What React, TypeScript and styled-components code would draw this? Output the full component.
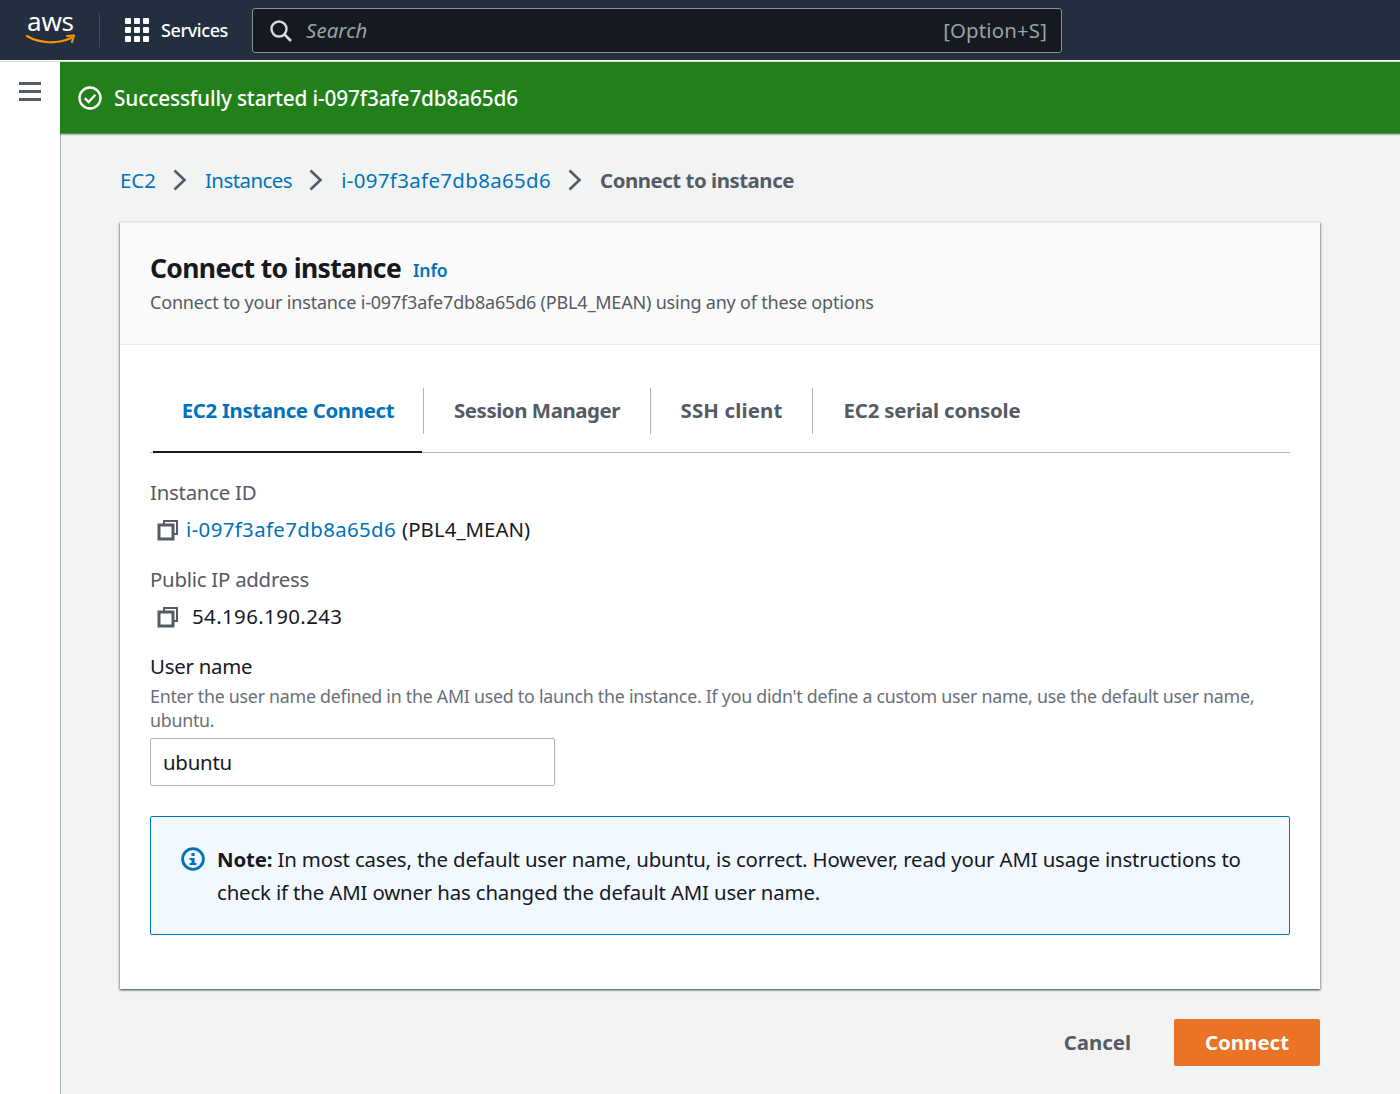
import React from 'react';
import styled, { createGlobalStyle } from 'styled-components';

const GlobalStyle = createGlobalStyle`
  html, body { margin: 0; padding: 0; background: #f2f3f3; }
  body { font-family: "Noto Sans", "Open Sans", sans-serif; color: #16191f; }
  * { box-sizing: border-box; }
`;

const Page = styled.div`
  width: 1400px;
  height: 1094px;
  overflow: hidden;
  display: flex;
  flex-direction: column;
`;

const TopBar = styled.header`
  height: 62px;
  flex: none;
  background: #232f3e;
  border-bottom: 1px solid #d5dbdb;
  box-shadow: inset 0 -1px 0 #fff;
  display: flex;
  align-items: flex-start;
  padding: 8px 0 0 26px;
`;

const Logo = styled.div`
  position: relative;
  width: 48px;
  height: 38px;
  flex: none;
  margin-top: 2px;
`;

const LogoText = styled.span`
  position: absolute;
  left: 1px;
  top: -4px;
  font-size: 26px;
  line-height: 30px;
  color: #fff;
  letter-spacing: -0.2px;
`;

const LogoSmile = styled.svg`
  position: absolute;
  left: 0;
  top: 23px;
`;

const BarDivider = styled.div`
  width: 1px;
  height: 34px;
  background: #414d5c;
  margin: 5px 25px 0 25px;
  flex: none;
`;

const ServicesButton = styled.div`
  display: flex;
  align-items: center;
  gap: 12px;
  height: 44px;
  width: 127px;
  flex: none;
  color: #fff;
  font-size: 18px;
  font-weight: 500;
  letter-spacing: -0.4px;
`;

const GridDots = styled.div`
  display: grid;
  grid-template-columns: repeat(3, 6px);
  grid-auto-rows: 6px;
  gap: 3px;
  & > i {
    display: block;
    background: #fff;
    border-radius: 1px;
  }
`;

const SearchBox = styled.div`
  width: 810px;
  height: 45px;
  flex: none;
  border: 1px solid #879596;
  border-radius: 3px;
  background: #16191f;
  display: flex;
  align-items: center;
  padding: 0 14px 0 16px;
  font-size: 20.4px;
`;

const SearchHint = styled.span`
  flex: 1;
  margin-left: 13px;
  padding-bottom: 2px;
  color: #95a5a6;
  font-style: italic;
  font-size: 20.4px;
  letter-spacing: 0.1px;
`;

const ShortcutHint = styled.span`
  padding-bottom: 2px;
  color: #95a5a6;
  letter-spacing: 0.15px;
`;

const Body = styled.div`
  flex: 1;
  display: flex;
  min-height: 0;
`;

const SideRail = styled.aside`
  width: 61px;
  flex: none;
  background: #fff;
  border-right: 1px solid #aab7b8;
  padding: 20px 0 0 19px;
  display: flex;
  flex-direction: column;
  gap: 5px;
  & > i {
    display: block;
    width: 22px;
    height: 3px;
    background: #545b64;
  }
`;

const Main = styled.main`
  flex: 1;
  min-width: 0;
  display: flex;
  flex-direction: column;
`;

const Banner = styled.div`
  height: 72px;
  flex: none;
  margin-left: -1px;
  background: #22801a;
  border-bottom: 1px solid #5f8d5a;
  box-shadow: 0 1px 1px rgba(0, 28, 36, 0.25);
  display: flex;
  align-items: center;
  gap: 12px;
  padding-left: 18px;
  color: #fff;
  font-size: 20.8px;
  font-weight: 500;
  letter-spacing: -0.17px;
`;

const Content = styled.div`
  flex: 1;
  padding: 0 80px 0 59px;
`;

const Crumbs = styled.nav`
  height: 88px;
  display: flex;
  align-items: center;
  padding-top: 4px;
  font-size: 20.4px;
`;

const CrumbLink = styled.a<{ $tracking: number }>`
  color: #0073bb;
  letter-spacing: ${({ $tracking }) => $tracking}px;
`;

const CrumbCurrent = styled.span`
  color: #545b64;
  font-weight: 700;
  letter-spacing: -0.46px;
`;

const CrumbChevron = styled.svg`
  margin: 0 17px 0 16px;
  flex: none;
`;

const Card = styled.section`
  background: #fff;
  height: 767px;
  box-shadow: 0 1px 2px 0 rgba(0, 28, 36, 0.5), 1px 1px 2px 0 rgba(0, 28, 36, 0.25), -1px 1px 2px 0 rgba(0, 28, 36, 0.25);
  border-top: 1px solid #eaeded;
`;

const CardHeader = styled.div`
  height: 122px;
  background: #fafafa;
  border-bottom: 1px solid #eaeded;
  padding: 26px 30px 0;
`;

const TitleRow = styled.div`
  display: flex;
  align-items: center;
  gap: 12px;
`;

const Title = styled.h1`
  margin: 0;
  font-size: 26.5px;
  line-height: 38px;
  font-weight: 700;
  letter-spacing: -0.65px;
`;

const InfoLink = styled.a`
  color: #0073bb;
  font-size: 17.6px;
  font-weight: 600;
  letter-spacing: -0.2px;
  padding-top: 3px;
`;

const Subtitle = styled.p`
  margin: 1px 0 0;
  color: #545b64;
  font-size: 18px;
  line-height: 28px;
  letter-spacing: -0.19px;
`;

const CardBody = styled.div`
  padding: 0 30px;
`;

const Tabs = styled.div`
  height: 108px;
  display: flex;
  align-items: flex-start;
  border-bottom: 1px solid #aab7b8;
  padding: 43px 0 0 3px;
`;

const Tab = styled.div<{ $active?: boolean; $last?: boolean; $width: number; $tracking: number }>`
  position: relative;
  width: ${({ $width }) => $width}px;
  height: 46px;
  padding-bottom: 2px;
  flex: none;
  display: flex;
  align-items: center;
  justify-content: center;
  font-size: 20.4px;
  font-weight: 700;
  letter-spacing: ${({ $tracking }) => $tracking}px;
  color: ${({ $active }) => ($active ? '#0073bb' : '#545b64')};
  border-right: ${({ $last }) => ($last ? 'none' : '1px solid #aab7b8')};
  ${({ $active }) =>
    $active &&
    `&:after {
      content: '';
      position: absolute;
      left: 0;
      right: 1px;
      bottom: -19px;
      height: 2px;
      background: #16191f;
    }`}
`;

const FieldLabel = styled.div<{ $strong?: boolean }>`
  font-size: 20.4px;
  line-height: 28px;
  margin-bottom: 2px;
  letter-spacing: -0.25px;
  color: ${({ $strong }) => ($strong ? '#16191f' : '#545b64')};
`;

const InstanceField = styled.div`
  padding-top: 25px;
`;

const SecondaryField = styled.div`
  padding-top: 13px;
`;

const ValueRow = styled.div`
  display: flex;
  align-items: center;
  height: 44px;
  padding-left: 7px;
  font-size: 20.4px;
  letter-spacing: 0.06px;
`;

const ValueText = styled.span`
  padding-bottom: 2px;
`;

const CopyIcon = styled.svg<{ $gap: number }>`
  flex: none;
  margin-right: ${({ $gap }) => $gap}px;
`;

const ValueLink = styled.a`
  color: #0073bb;
  margin-right: 6px;
  letter-spacing: 0.38px;
`;

const IpValue = styled(ValueText)`
  letter-spacing: 0.41px;
`;

const Hint = styled.p`
  margin: 4px 0 0;
  color: #687078;
  font-size: 17.8px;
  line-height: 24px;
  letter-spacing: -0.25px;
`;

const NameInput = styled.div`
  width: 405px;
  height: 48px;
  margin-top: 6px;
  border: 1px solid #aab7b8;
  border-radius: 2px;
  background: #fff;
  display: flex;
  align-items: center;
  padding-left: 12px;
  font-size: 20.4px;
  letter-spacing: -0.24px;
`;

const NoteBox = styled.div`
  height: 119px;
  margin-top: 30px;
  border: 1px solid #0073bb;
  border-radius: 2px;
  background: #f1f8fe;
  display: flex;
  align-items: flex-start;
  padding: 26px 30px 0;
  gap: 12px;
`;

const NoteIcon = styled.svg`
  flex: none;
  margin-top: 4px;
`;

const NoteText = styled.p`
  margin: 0;
  font-size: 20.4px;
  line-height: 33px;
  letter-spacing: -0.15px;
  & > b {
    font-weight: 700;
  }
`;

const Actions = styled.div`
  display: flex;
  justify-content: flex-end;
  align-items: center;
  gap: 43px;
  margin-top: 30px;
`;

const CancelButton = styled.div`
  color: #545b64;
  font-size: 20.4px;
  font-weight: 700;
  letter-spacing: -0.02px;
  padding-bottom: 2px;
`;

const ConnectButton = styled.div`
  width: 146px;
  height: 47px;
  border-radius: 2px;
  background: #eb7326;
  color: #fff;
  font-size: 20.4px;
  font-weight: 700;
  display: flex;
  align-items: center;
  justify-content: center;
  letter-spacing: 0.03px;
  padding-bottom: 2px;
`;

const Chevron = () => (
  <CrumbChevron width="16" height="24" viewBox="0 0 16 24" fill="none">
    <path d="M2.5 2.5 L12.5 12 L2.5 21.5" stroke="#545b64" strokeWidth="2.6" />
  </CrumbChevron>
);

const Copy = ({ gap }: { gap: number }) => (
  <CopyIcon $gap={gap} width="22" height="22" viewBox="0 0 22 22" fill="none">
    <path d="M7 5 V2 H20 V15 H16" stroke="#545b64" strokeWidth="2" />
    <rect x="2" y="6" width="14" height="14" stroke="#545b64" strokeWidth="3" />
  </CopyIcon>
);

const App: React.FC = () => (
  <Page>
    <GlobalStyle />
    <TopBar>
      <Logo>
        <LogoText>aws</LogoText>
        <LogoSmile width="50" height="14" viewBox="0 0 50 14" fill="none">
          <path d="M1 3 C14 11 32 11 45 5" stroke="#f79400" strokeWidth="2.2" strokeLinecap="round" />
          <path d="M41 3 L48 2.5 L46 9" stroke="#f79400" strokeWidth="2" strokeLinecap="round" strokeLinejoin="round" />
        </LogoSmile>
      </Logo>
      <BarDivider />
      <ServicesButton>
        <GridDots>
          {Array.from({ length: 9 }).map((_, i) => (
            <i key={i} />
          ))}
        </GridDots>
        Services
      </ServicesButton>
      <SearchBox>
        <svg width="24" height="24" viewBox="0 0 24 24" fill="none">
          <circle cx="10" cy="10" r="7.5" stroke="#d5dbdb" strokeWidth="2.4" />
          <path d="M15.5 15.5 L22 22" stroke="#d5dbdb" strokeWidth="2.6" />
        </svg>
        <SearchHint>Search</SearchHint>
        <ShortcutHint>[Option+S]</ShortcutHint>
      </SearchBox>
    </TopBar>
    <Body>
      <SideRail>
        <i />
        <i />
        <i />
      </SideRail>
      <Main>
        <Banner>
          <svg width="24" height="24" viewBox="0 0 24 24" fill="none">
            <circle cx="12" cy="12" r="10.5" stroke="#fff" strokeWidth="2.4" />
            <path d="M6.8 12.2 L10.6 16 L17.4 8.8" stroke="#fff" strokeWidth="2.4" />
          </svg>
          Successfully started i-097f3afe7db8a65d6
        </Banner>
        <Content>
          <Crumbs>
            <CrumbLink $tracking={0}>EC2</CrumbLink>
            <Chevron />
            <CrumbLink $tracking={-0.5}>Instances</CrumbLink>
            <Chevron />
            <CrumbLink $tracking={0.37}>i-097f3afe7db8a65d6</CrumbLink>
            <Chevron />
            <CrumbCurrent>Connect to instance</CrumbCurrent>
          </Crumbs>
          <Card>
            <CardHeader>
              <TitleRow>
                <Title>Connect to instance</Title>
                <InfoLink>Info</InfoLink>
              </TitleRow>
              <Subtitle>Connect to your instance i-097f3afe7db8a65d6 (PBL4_MEAN) using any of these options</Subtitle>
            </CardHeader>
            <CardBody>
              <Tabs>
                <Tab $active $width={271} $tracking={-0.33}>EC2 Instance Connect</Tab>
                <Tab $width={227} $tracking={-0.43}>Session Manager</Tab>
                <Tab $width={162} $tracking={0.15}>SSH client</Tab>
                <Tab $last $width={238} $tracking={-0.2}>EC2 serial console</Tab>
              </Tabs>
              <InstanceField>
                <FieldLabel>Instance ID</FieldLabel>
                <ValueRow>
                  <Copy gap={7} />
                  <ValueText>
                    <ValueLink>i-097f3afe7db8a65d6</ValueLink>
                    (PBL4_MEAN)
                  </ValueText>
                </ValueRow>
              </InstanceField>
              <SecondaryField>
                <FieldLabel>Public IP address</FieldLabel>
                <ValueRow>
                  <Copy gap={13} />
                  <IpValue>54.196.190.243</IpValue>
                </ValueRow>
              </SecondaryField>
              <SecondaryField>
                <FieldLabel $strong>User name</FieldLabel>
                <Hint>
                  Enter the user name defined in the AMI used to launch the instance. If you didn't define a custom user name, use the default user name, ubuntu.
                </Hint>
                <NameInput>ubuntu</NameInput>
              </SecondaryField>
              <NoteBox>
                <NoteIcon width="24" height="24" viewBox="0 0 24 24" fill="none">
                  <circle cx="12" cy="12" r="10.4" stroke="#0073bb" strokeWidth="2.8" />
                  <rect x="10.4" y="6" width="3.2" height="3" fill="#0073bb" />
                  <path d="M8.5 11 H13.6 V16 H15.5 V18 H8.5 V16 H10.4 V13 H8.5 Z" fill="#0073bb" />
                </NoteIcon>
                <NoteText>
                  <b>Note:</b> In most cases, the default user name, ubuntu, is correct. However, read your AMI usage instructions to check if the AMI owner has changed the default AMI user name.
                </NoteText>
              </NoteBox>
            </CardBody>
          </Card>
          <Actions>
            <CancelButton>Cancel</CancelButton>
            <ConnectButton>Connect</ConnectButton>
          </Actions>
        </Content>
      </Main>
    </Body>
  </Page>
);

export default App;
